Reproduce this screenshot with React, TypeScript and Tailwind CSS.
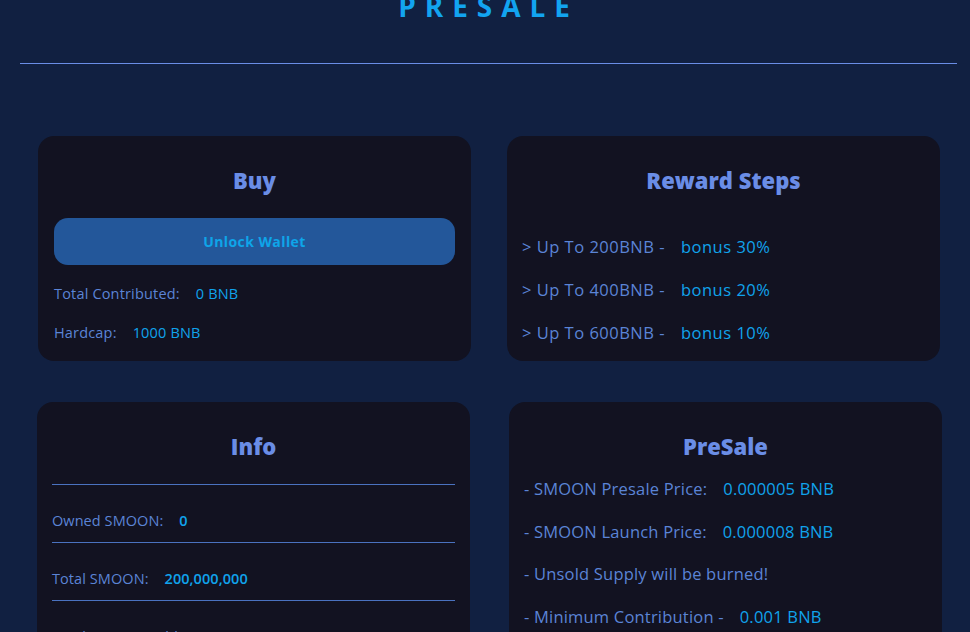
import React from "react";

const rewards = [
  { step: "> Up To 200BNB -", bonus: "bonus 30%" },
  { step: "> Up To 400BNB -", bonus: "bonus 20%" },
  { step: "> Up To 600BNB -", bonus: "bonus 10%" },
];

const infoRows = [
  { label: "Owned SMOON:", value: "0" },
  { label: "Total SMOON:", value: "200,000,000" },
  { label: "Total SMOON Sold:", value: "0" },
];

const presaleRows = [
  { label: "- SMOON Presale Price:", value: "0.000005 BNB" },
  { label: "- SMOON Launch Price:", value: "0.000008 BNB" },
  { label: "- Unsold Supply will be burned!", value: "" },
  { label: "- Minimum Contribution -", value: "0.001 BNB" },
  { label: "- Maximum Contribution -", value: "10 BNB" },
];

function CardTitle({ children }: { children: React.ReactNode }) {
  return (
    <h2 className="text-center text-[22px] leading-[28px] font-extrabold tracking-normal text-[#6a8de6]">
      {children}
    </h2>
  );
}

export default function App() {
  return (
    <div
      className="min-h-screen bg-[#112041] overflow-hidden"
      style={{ fontFamily: '"Open Sans", "Liberation Sans", sans-serif' }}
    >
      {/* header */}
      <div className="px-[20px] pr-[13px]">
        <h1 className="mt-[-8px] text-center text-[28px] leading-[28px] font-bold tracking-[0.32em] text-[#12a4f0]">
          PRESALE
        </h1>
        <div className="mt-[43px] h-px bg-[#6a8de6]" />
      </div>

      <div className="grid grid-cols-2 gap-x-[36px] gap-y-[41px] pl-[38px] pr-[30px] pt-[72px]">
        {/* Buy */}
        <div className="rounded-[16px] bg-[#121221] px-[16px] pt-[30px] pb-[18px]">
          <CardTitle>Buy</CardTitle>
          <button className="mt-[24px] h-[47px] w-full rounded-[14px] bg-[#23579a] text-[14px] font-bold tracking-[0.03em] text-[#0ea5e9]">
            Unlock Wallet
          </button>
          <div className="mt-[19px] flex flex-col gap-[19px] text-[14.5px] leading-[20px] tracking-[0.012em]">
            <p className="text-[#5b84d6]">
              Total Contributed:
              <span className="ml-[16px] font-medium text-[#10a3ec]">0 BNB</span>
            </p>
            <p className="text-[#5b84d6]">
              Hardcap:
              <span className="ml-[16px] font-medium text-[#10a3ec]">1000 BNB</span>
            </p>
          </div>
        </div>

        {/* Reward steps */}
        <div className="rounded-[16px] bg-[#121221] px-[15px] pt-[30px] pb-[16px]">
          <CardTitle>Reward Steps</CardTitle>
          <div className="mt-[41px] flex flex-col gap-[19px] text-[16.5px] leading-[24px] tracking-[0.03em]">
            {rewards.map((r) => (
              <p key={r.step} className="text-[#5b84d6]">
                {r.step}
                <span className="ml-[16px] text-[#10a3ec]">{r.bonus}</span>
              </p>
            ))}
          </div>
        </div>

        {/* Info */}
        <div className="ml-[-1px] mr-[1px] rounded-[16px] bg-[#121221] px-[15px] pt-[30px] pb-[16px]">
          <CardTitle>Info</CardTitle>
          <div className="mt-[24px] border-t border-[#4a72c0]">
            {infoRows.map((row) => (
              <div
                key={row.label}
                className="border-b border-[#4a72c0] pt-[26px] pb-[11px] text-[14.5px] leading-[20px] tracking-[0.005em] text-[#5b84d6]"
              >
                {row.label}
                <span className="ml-[16px] font-semibold text-[#10a3ec]">{row.value}</span>
              </div>
            ))}
          </div>
        </div>

        {/* PreSale */}
        <div className="ml-[2px] mr-[-2px] rounded-[16px] bg-[#121221] px-[15px] pt-[30px] pb-[16px]">
          <CardTitle>PreSale</CardTitle>
          <div className="mt-[17px] flex flex-col gap-[18.5px] text-[16.5px] leading-[24px] tracking-[0.012em]">
            {presaleRows.map((row) => (
              <p key={row.label} className="text-[#5b84d6]">
                {row.label}
                {row.value && (
                  <span className="ml-[16px] text-[#10a3ec]">{row.value}</span>
                )}
              </p>
            ))}
          </div>
        </div>
      </div>
    </div>
  );
}
